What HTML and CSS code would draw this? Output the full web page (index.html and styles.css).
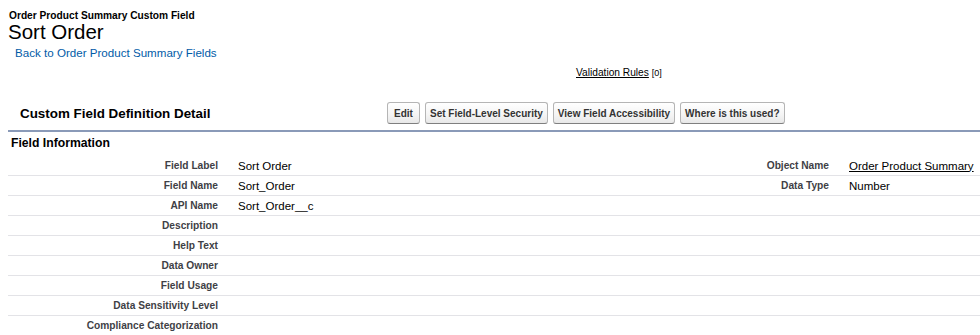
FILE: index.html
```html
<!DOCTYPE html>
<html lang="en">
<head>
<meta charset="utf-8">
<title>Sort Order - Custom Field</title>
<link rel="stylesheet" href="styles.css">
</head>
<body>
<div class="page">
  <div class="bPageTitle">
    <div class="pageType">Order Product Summary Custom Field</div>
    <h2 class="pageDescription">Sort Order</h2>
    <div class="backLink"><a href="#">Back to Order Product Summary Fields</a></div>
  </div>

  <div class="listLinks">
    <a href="#" class="linklet">Validation Rules</a> <span class="count">[0]</span>
  </div>

  <div class="pbHeader">
    <h3 class="pbTitle">Custom Field Definition Detail</h3>
    <div class="pbButton">
      <button class="btn">Edit</button>
      <button class="btn">Set Field-Level Security</button>
      <button class="btn">View Field Accessibility</button>
      <button class="btn">Where is this used?</button>
    </div>
  </div>

  <div class="pbBody">
    <h3 class="pbSubheader">Field Information</h3>
    <div class="detailList">
      <div class="row">
        <div class="labelCol">Field Label</div><div class="dataCol">Sort Order</div>
        <div class="labelCol">Object Name</div><div class="dataCol"><a href="#" class="objLink">Order Product Summary</a></div>
      </div>
      <div class="row">
        <div class="labelCol">Field Name</div><div class="dataCol">Sort_Order</div>
        <div class="labelCol">Data Type</div><div class="dataCol">Number</div>
      </div>
      <div class="row">
        <div class="labelCol">API Name</div><div class="dataCol">Sort_Order__c</div>
        <div class="labelCol"></div><div class="dataCol"></div>
      </div>
      <div class="row">
        <div class="labelCol">Description</div><div class="dataCol"></div>
        <div class="labelCol"></div><div class="dataCol"></div>
      </div>
      <div class="row">
        <div class="labelCol">Help Text</div><div class="dataCol"></div>
        <div class="labelCol"></div><div class="dataCol"></div>
      </div>
      <div class="row">
        <div class="labelCol">Data Owner</div><div class="dataCol"></div>
        <div class="labelCol"></div><div class="dataCol"></div>
      </div>
      <div class="row">
        <div class="labelCol">Field Usage</div><div class="dataCol"></div>
        <div class="labelCol"></div><div class="dataCol"></div>
      </div>
      <div class="row">
        <div class="labelCol">Data Sensitivity Level</div><div class="dataCol"></div>
        <div class="labelCol"></div><div class="dataCol"></div>
      </div>
      <div class="row">
        <div class="labelCol">Compliance Categorization</div><div class="dataCol"></div>
        <div class="labelCol"></div><div class="dataCol"></div>
      </div>
    </div>
  </div>
</div>
</body>
</html>
```

FILE: styles.css
```css
html, body {
  margin: 0;
  padding: 0;
  overflow: hidden;
  background: #ffffff;
}

body {
  font-family: "Liberation Sans", Arial, sans-serif;
  color: #000000;
}

.page {
  padding-left: 8px;
}

.bPageTitle {
  padding-top: 10px;
}

.pageType {
  font-size: 10.2px;
  font-weight: bold;
  color: #000;
  padding-left: 1px;
  line-height: 12px;
}

.pageDescription {
  margin: 0;
  font-size: 20.5px;
  font-weight: normal;
  line-height: 20px;
}

.backLink {
  padding: 4px 0 0 7px;
  font-size: 11.6px;
  line-height: 14px;
}

.backLink a {
  color: #015ba7;
  text-decoration: none;
}

.listLinks {
  padding: 6px 0 0 568px;
  font-size: 10.2px;
  line-height: 13px;
}

.linklet {
  color: #000;
  text-decoration: underline;
}

.count {
  font-size: 9px;
}

.pbHeader {
  display: grid;
  grid-template-columns: 379px 1fr;
  align-items: center;
  margin-top: 22px;
  padding-bottom: 6px;
  border-bottom: 2px solid #8a9ab8;
}

.pbTitle {
  margin: 0;
  padding-left: 12px;
  font-size: 13.4px;
  font-weight: bold;
  color: #000;
}

.pbButton {
  display: flex;
  gap: 5px;
}

.btn {
  font-family: "Liberation Sans", Arial, sans-serif;
  font-size: 10px;
  font-weight: bold;
  color: #333;
  min-width: 33px;
  padding: 0 4px;
  height: 22px;
  border: 1px solid #b5b5b5;
  border-bottom-color: #7f7f7f;
  border-radius: 3px;
  background: linear-gradient(#ffffff, #f4f4f4 60%, #e8e8e8);
  cursor: pointer;
}

.pbSubheader {
  margin: 0;
  padding: 4px 3px 6px;
  font-size: 12.2px;
  font-weight: bold;
  color: #000;
  line-height: 14px;
}

.detailList {
  display: flex;
  flex-direction: column;
}

.row {
  display: grid;
  grid-template-columns: 220px 391px 220px 1fr;
  box-sizing: border-box;
  height: 20px;
  border-bottom: 1px solid #e3e3e7;
  align-items: center;
}

.labelCol {
  text-align: right;
  padding: 0 10px 0 2px;
  font-size: 10.2px;
  font-weight: bold;
  color: #3f3f46;
  white-space: nowrap;
}

.dataCol {
  padding-left: 10px;
  font-size: 11.5px;
  color: #000;
  white-space: nowrap;
}

.objLink {
  color: #000;
  text-decoration: underline;
}
```
